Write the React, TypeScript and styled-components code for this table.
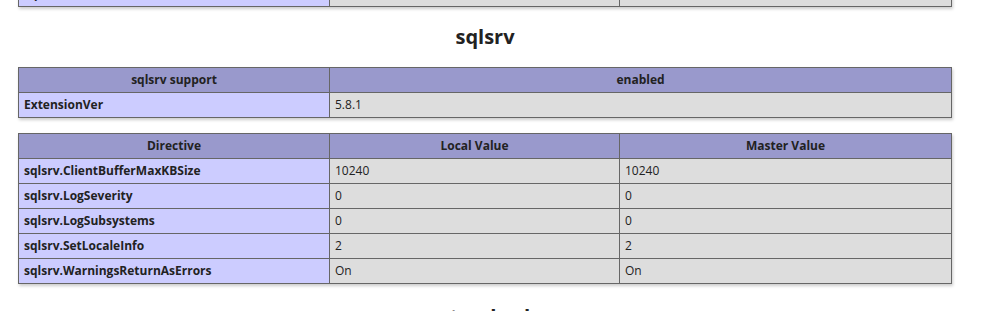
import React from "react";
import styled, { createGlobalStyle } from "styled-components";

type Row = [string, string, string?];

const sqlsrvInfo: Row[] = [["ExtensionVer", "5.8.1"]];

const sqlsrvDirectives: Row[] = [
  ["sqlsrv.ClientBufferMaxKBSize", "10240", "10240"],
  ["sqlsrv.LogSeverity", "0", "0"],
  ["sqlsrv.LogSubsystems", "0", "0"],
  ["sqlsrv.SetLocaleInfo", "2", "2"],
  ["sqlsrv.WarningsReturnAsErrors", "On", "On"],
];

const App = () => {
  return (
    <>
      <GlobalStyle />
      <Page>
        {/* tail of the previous section, scrolled mostly out of view */}
        <Scrolled>
          <Table>
            <tbody>
              <tr>
                <E>sqlite3.extension_dir</E>
                <V $w={279} />
                <V />
              </tr>
            </tbody>
          </Table>
        </Scrolled>

        <Heading>sqlsrv</Heading>

        <Table>
          <tbody>
            <tr>
              <H $w={300}>sqlsrv support</H>
              <H>enabled</H>
            </tr>
            {sqlsrvInfo.map(([name, value]) => (
              <tr key={name}>
                <E>{name}</E>
                <V>{value}</V>
              </tr>
            ))}
          </tbody>
        </Table>

        <Table>
          <tbody>
            <tr>
              <H $w={300}>Directive</H>
              <H $w={279}>Local Value</H>
              <H>Master Value</H>
            </tr>
            {sqlsrvDirectives.map(([name, local, master]) => (
              <tr key={name}>
                <E>{name}</E>
                <V>{local}</V>
                <V>{master}</V>
              </tr>
            ))}
          </tbody>
        </Table>

        <Heading $top={19}>standard</Heading>
      </Page>
    </>
  );
};

export default App;

const GlobalStyle = createGlobalStyle`
  html, body {
    margin: 0;
    padding: 0;
    background: #fff;
    overflow: hidden;
  }
  body {
    font-family: "Open Sans", "Noto Sans", sans-serif;
    color: #222;
  }
`;

export const Page = styled.div`
  width: 970px;
  height: 311px;
  overflow: hidden;
  text-align: center;
`;

export const Scrolled = styled.div`
  margin-top: -19px;
`;

export const Heading = styled.h2<{ $top?: number }>`
  margin: ${(p) => p.$top ?? 16}px 0 16px;
  font-size: 20px;
  line-height: 28px;
  font-weight: bold;
`;

export const Table = styled.table`
  width: 934px;
  margin: 0 auto 15px;
  border-collapse: collapse;
  box-shadow: 1px 2px 3px #ccc;
  text-align: left;
`;

const Cell = `
  border: 1px solid #666;
  font-size: 12px;
  line-height: 16px;
  padding: 4px 5px;
  vertical-align: baseline;
`;

export const H = styled.th<{ $w?: number }>`
  ${Cell}
  background-color: #99c;
  font-weight: bold;
  text-align: center;
  color: #222;
  ${(p) => (p.$w ? `width: ${p.$w}px;` : "")}
`;

export const E = styled.td`
  ${Cell}
  background-color: #ccf;
  width: 300px;
  font-weight: bold;
`;

export const V = styled.td<{ $w?: number }>`
  ${Cell}
  background-color: #ddd;
  ${(p) => (p.$w ? `width: ${p.$w}px;` : "")}
`;
